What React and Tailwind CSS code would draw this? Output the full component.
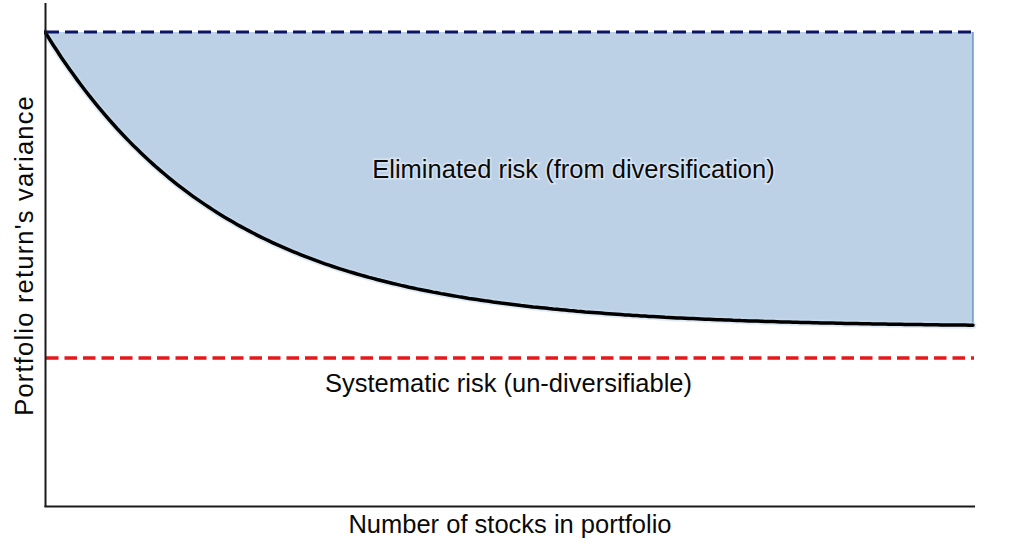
import React from "react";

const X0 = 45;
const X1 = 973;
const TOP = 32;
const FLOOR = 327;

function curvePoints() {
  const pts = [];
  for (let x = X0; x <= X1; x += 4) {
    const y = FLOOR - (FLOOR - TOP) * Math.exp(-0.0055 * (x - X0));
    pts.push([x, y]);
  }
  pts.push([X1, FLOOR - (FLOOR - TOP) * Math.exp(-0.0055 * (X1 - X0))]);
  return pts;
}

function RiskChart() {
  const pts = curvePoints();
  const line = pts.map(([x, y], i) => `${i ? "L" : "M"}${x.toFixed(1)} ${y.toFixed(1)}`).join(" ");
  const last = pts[pts.length - 1];
  const area = `${line} L${X1} ${TOP} Z`;

  return (
    <svg width="974" height="510" viewBox="44 0 974 510" className="block">
      <path d={area} fill="#bcd1e6" />
      <line x1={X1} y1={TOP} x2={X1} y2={last[1]} stroke="#4f83b8" strokeWidth="1.2" />
      <path d={line} fill="none" stroke="#c9dcef" strokeWidth="7" strokeLinecap="round" opacity="0.6" />
      <path d={line} fill="none" stroke="#000" strokeWidth="3.5" strokeLinecap="round" />

      <line x1="46" y1={TOP} x2="975" y2={TOP} stroke="#0c1464" strokeWidth="3" strokeDasharray="13 6" />
      <line x1="46" y1="358" x2="974" y2="358" stroke="#e3191b" strokeWidth="3.5" strokeDasharray="12.5 6" />

      <line x1="45.5" y1="3" x2="45.5" y2="507" stroke="#1a1a1a" strokeWidth="2" />
      <line x1="44.5" y1="506.5" x2="975" y2="506.5" stroke="#1a1a1a" strokeWidth="2" />

      <text
        x="573.5"
        y="177.5"
        textAnchor="middle"
        fontSize="25.5"
        fill="#0a0a0a"
        stroke="#d6e4f2"
        strokeWidth="3"
        paintOrder="stroke"
      >
        Eliminated risk (from diversification)
      </text>
      <text x="508.5" y="392" textAnchor="middle" fontSize="25.5" fill="#0a0a0a">
        Systematic risk (un-diversifiable)
      </text>
    </svg>
  );
}

export default function App() {
  return (
    <div className="flex h-[558px] w-[1018px] bg-white font-['Liberation_Sans',Arial,sans-serif] text-[#0a0a0a]">
      <div className="flex h-[510px] w-[44px] shrink-0 items-center pl-[12px]">
        <span className="rotate-180 text-[25.5px] leading-none tracking-[1.2px] [writing-mode:vertical-rl]">
          Portfolio return's variance
        </span>
      </div>
      <div className="flex flex-col">
        <RiskChart />
        <p className="mt-[1.5px] w-[932px] text-center text-[25.5px] leading-none">
          Number of stocks in portfolio
        </p>
      </div>
    </div>
  );
}
